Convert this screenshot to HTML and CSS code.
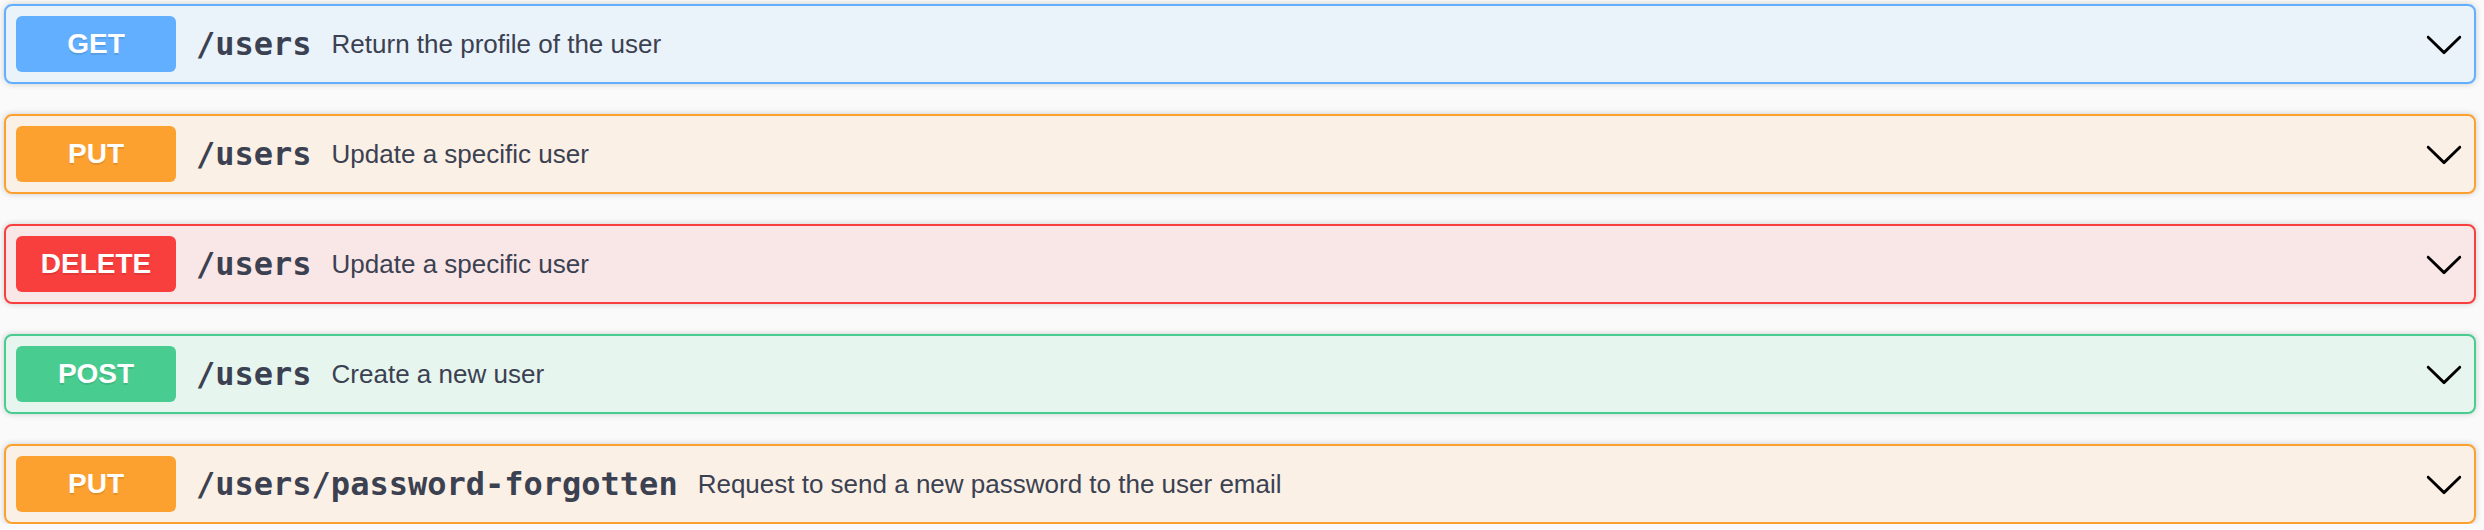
FILE: index.html
```html
<!DOCTYPE html>
<html lang="en">
<head>
<meta charset="utf-8">
<title>Operations</title>
<link rel="stylesheet" href="styles.css">
</head>
<body>
<div class="opblocks">
  <div class="opblock get">
    <div class="summary">
      <span class="method">GET</span>
      <span class="path">/users</span>
      <span class="desc">Return the profile of the user</span>
      <svg class="arrow" viewBox="0 0 20 20"><path d="M17.418 6.109c.272-.268.709-.268.979 0s.271.701 0 .969l-7.908 7.83c-.27.268-.707.268-.979 0l-7.908-7.83c-.27-.268-.27-.701 0-.969.271-.268.709-.268.979 0L10 13.25l7.418-7.141z"/></svg>
    </div>
  </div>
  <div class="opblock put">
    <div class="summary">
      <span class="method">PUT</span>
      <span class="path">/users</span>
      <span class="desc">Update a specific user</span>
      <svg class="arrow" viewBox="0 0 20 20"><path d="M17.418 6.109c.272-.268.709-.268.979 0s.271.701 0 .969l-7.908 7.83c-.27.268-.707.268-.979 0l-7.908-7.83c-.27-.268-.27-.701 0-.969.271-.268.709-.268.979 0L10 13.25l7.418-7.141z"/></svg>
    </div>
  </div>
  <div class="opblock delete">
    <div class="summary">
      <span class="method">DELETE</span>
      <span class="path">/users</span>
      <span class="desc">Update a specific user</span>
      <svg class="arrow" viewBox="0 0 20 20"><path d="M17.418 6.109c.272-.268.709-.268.979 0s.271.701 0 .969l-7.908 7.83c-.27.268-.707.268-.979 0l-7.908-7.83c-.27-.268-.27-.701 0-.969.271-.268.709-.268.979 0L10 13.25l7.418-7.141z"/></svg>
    </div>
  </div>
  <div class="opblock post">
    <div class="summary">
      <span class="method">POST</span>
      <span class="path">/users</span>
      <span class="desc">Create a new user</span>
      <svg class="arrow" viewBox="0 0 20 20"><path d="M17.418 6.109c.272-.268.709-.268.979 0s.271.701 0 .969l-7.908 7.83c-.27.268-.707.268-.979 0l-7.908-7.83c-.27-.268-.27-.701 0-.969.271-.268.709-.268.979 0L10 13.25l7.418-7.141z"/></svg>
    </div>
  </div>
  <div class="opblock put">
    <div class="summary">
      <span class="method">PUT</span>
      <span class="path">/users/password-forgotten</span>
      <span class="desc">Request to send a new password to the user email</span>
      <svg class="arrow" viewBox="0 0 20 20"><path d="M17.418 6.109c.272-.268.709-.268.979 0s.271.701 0 .969l-7.908 7.83c-.27.268-.707.268-.979 0l-7.908-7.83c-.27-.268-.27-.701 0-.969.271-.268.709-.268.979 0L10 13.25l7.418-7.141z"/></svg>
    </div>
  </div>
</div>
</body>
</html>
```
FILE: styles.css
```css
html, body {
  margin: 0;
  background: #fafafa;
}

.opblocks {
  display: flex;
  flex-direction: column;
  gap: 30px;
  padding: 4px 8px 0 4px;
}

.opblock {
  border: 2px solid #000;
  border-radius: 8px;
  box-shadow: 0 0 6px rgba(0, 0, 0, 0.19);
}

.summary {
  display: flex;
  align-items: center;
  padding: 10px;
}

.method {
  min-width: 160px;
  padding: 12px 0;
  font-family: "Liberation Sans", Arial, sans-serif;
  font-weight: 700;
  font-size: 28px;
  line-height: 32px;
  color: #fff;
  text-align: center;
  border-radius: 6px;
  text-shadow: 0 2px 0 rgba(0, 0, 0, 0.1);
}

.path {
  padding: 0 20px;
  font-family: "DejaVu Sans Mono", monospace;
  font-weight: 700;
  font-size: 32px;
  color: #3b4151;
}

.desc {
  flex: 1 1 auto;
  font-family: "Liberation Sans", Arial, sans-serif;
  font-size: 26px;
  color: #3b4151;
}

.arrow {
  width: 40px;
  height: 40px;
  flex: none;
  fill: #000;
}

.get { border-color: #61affe; background: rgba(97, 175, 254, 0.1); }
.get .method { background: #61affe; }

.put { border-color: #fca130; background: rgba(252, 161, 48, 0.1); }
.put .method { background: #fca130; }

.delete { border-color: #f93e3e; background: rgba(249, 62, 62, 0.1); }
.delete .method { background: #f93e3e; }

.post { border-color: #49cc90; background: rgba(73, 204, 144, 0.1); }
.post .method { background: #49cc90; }
```
